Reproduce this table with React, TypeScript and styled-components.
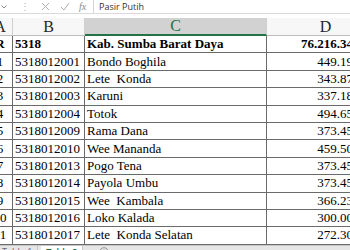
import React from 'react';
import styled, { createGlobalStyle } from 'styled-components';

const GlobalStyle = createGlobalStyle`
  html, body {
    margin: 0;
    padding: 0;
    background: #ffffff;
    overflow: hidden;
  }
`;

interface IRow {
  no: string,
  code: string,
  name: string,
  area: string,
  bold?: boolean,
}

const rows: IRow[] = [
  { no: 'R', code: '5318', name: 'Kab. Sumba Barat Daya', area: '76.216.34', bold: true },
  { no: '1', code: '5318012001', name: 'Bondo Boghila', area: '449.19' },
  { no: '2', code: '5318012002', name: 'Lete  Konda', area: '343.87' },
  { no: '3', code: '5318012003', name: 'Karuni', area: '337.18' },
  { no: '4', code: '5318012004', name: 'Totok', area: '494.65' },
  { no: '5', code: '5318012009', name: 'Rama Dana', area: '373.45' },
  { no: '6', code: '5318012010', name: 'Wee Mananda', area: '459.50' },
  { no: '7', code: '5318012013', name: 'Pogo Tena', area: '373.45' },
  { no: '8', code: '5318012014', name: 'Payola Umbu', area: '373.45' },
  { no: '9', code: '5318012015', name: 'Wee  Kambala', area: '366.23' },
  { no: '10', code: '5318012016', name: 'Loko Kalada', area: '300.00' },
  { no: '11', code: '5318012017', name: 'Lete  Konda Selatan', area: '272.30' },
];

const columns = ['A', 'B', 'C', 'D'];

const App: React.FC = () => {
  return (
    <>
      <GlobalStyle />
      <Frame>
        <FormulaBar>
          <NameBoxArrow>
            <svg width="6" height="4" viewBox="0 0 6 4">
              <path d="M0.5 0.5 L3 3 L5.5 0.5" fill="none" stroke="#8a8a8a" strokeWidth="1" />
            </svg>
          </NameBoxArrow>
          <Dots>⋮</Dots>
          <BarIcon>
            <svg width="9" height="9" viewBox="0 0 9 9">
              <path d="M1 1 L8 8 M8 1 L1 8" stroke="#b0b0b0" strokeWidth="1" />
            </svg>
          </BarIcon>
          <BarIcon>
            <svg width="10" height="9" viewBox="0 0 10 9">
              <path d="M1 5 L4 8 L9 1" fill="none" stroke="#b0b0b0" strokeWidth="1" />
            </svg>
          </BarIcon>
          <FxLabel>fx</FxLabel>
          <FormulaInput>Pasir Putih</FormulaInput>
        </FormulaBar>
        <Sheet>
          {columns.map((c) => (
            <HeaderCell key={c} $active={c === 'C'}>{c}</HeaderCell>
          ))}
          {rows.map((r) => (
            <React.Fragment key={r.code}>
              <Cell $align="center" $bold={r.bold}><span>{r.no}</span></Cell>
              <Cell $bold={r.bold}><span>{r.code}</span></Cell>
              <Cell $bold={r.bold}><span>{r.name}</span></Cell>
              <Cell $align="right" $bold={r.bold}><span>{r.area}</span></Cell>
            </React.Fragment>
          ))}
        </Sheet>
        <TabBar>
          <Tab>Table 1</Tab>
          <Tab $active>Table 2</Tab>
          <AddSheet>
            <svg width="10" height="10" viewBox="0 0 10 10">
              <circle cx="5" cy="5" r="4.3" fill="none" stroke="#8a8a8a" strokeWidth="0.9" />
              <path d="M5 2.6 V7.4 M2.6 5 H7.4" stroke="#8a8a8a" strokeWidth="0.9" />
            </svg>
          </AddSheet>
        </TabBar>
      </Frame>
    </>
  );
};

export default App;

const Frame = styled.div`
  width: 350px;
  height: 250px;
  overflow: hidden;
  display: flex;
  flex-direction: column;
  background: #ffffff;
`;

const FormulaBar = styled.div`
  height: 13px;
  flex: none;
  display: flex;
  align-items: center;
  border-bottom: 1px solid #dadada;
  margin-bottom: 4px;
  font-family: 'Open Sans', 'Noto Sans', sans-serif;
`;

const NameBoxArrow = styled.div`
  width: 8px;
  display: flex;
  justify-content: center;
`;

const Dots = styled.div`
  width: 10px;
  margin-left: 12px;
  color: #b5b5b5;
  font-size: 10px;
  line-height: 13px;
  text-align: center;
`;

const BarIcon = styled.div`
  width: 10px;
  display: flex;
  justify-content: center;
  margin-left: 10px;
`;

const FxLabel = styled.div`
  margin-left: 9px;
  width: 12px;
  font-family: 'Liberation Serif', serif;
  font-style: italic;
  font-size: 10px;
  color: #8a8a8a;
  line-height: 13px;
`;

const FormulaInput = styled.div`
  flex: 1;
  height: 13px;
  margin-left: 2px;
  padding-left: 5px;
  border-left: 1px solid #d4d4d4;
  font-size: 9px;
  line-height: 13px;
  color: #333333;
`;

const Sheet = styled.div`
  flex: none;
  display: grid;
  grid-template-columns: 25px 72px 182px 118px;
  grid-template-rows: 18px;
  grid-auto-rows: 17.4px;
  margin-left: -12px;
  font-family: 'Liberation Serif', 'Times New Roman', serif;
  font-size: 13px;
  color: #000000;
`;

const HeaderCell = styled.div<{ $active?: boolean }>`
  box-sizing: border-box;
  display: flex;
  align-items: center;
  justify-content: center;
  font-size: 16px;
  color: ${(p) => (p.$active ? '#217346' : '#262626')};
  background: ${(p) => (p.$active ? '#d2d2d2' : '#f7f7f7')};
  border-right: 1px solid #cfcfcf;
  border-bottom: ${(p) => (p.$active ? '2px solid #217346' : '1px solid #bcbcbc')};
`;

const Cell = styled.div<{ $align?: 'left' | 'center' | 'right', $bold?: boolean }>`
  box-sizing: border-box;
  display: flex;
  align-items: center;
  justify-content: ${(p) => (p.$align === 'right' ? 'flex-end' : p.$align === 'center' ? 'center' : 'flex-start')};
  padding: ${(p) => (p.$align === 'right' ? '0 31px 0 0' : p.$align === 'center' ? '0' : '0 0 0 2px')};
  border-right: 1px solid #6a6a6a;
  border-bottom: 1px solid #6a6a6a;
  font-weight: ${(p) => (p.$bold ? 700 : 400)};
  white-space: pre;
  overflow: hidden;
`;

const TabBar = styled.div`
  flex: 1;
  display: flex;
  align-items: flex-start;
  background: #e6e6e6;
  border-top: 1px solid #c8c8c8;
  font-family: 'Open Sans', 'Noto Sans', sans-serif;
  font-size: 9px;
  line-height: 12px;
`;

const Tab = styled.div<{ $active?: boolean }>`
  padding: 0 5px;
  margin-left: ${(p) => (p.$active ? '3px' : '-3px')};
  color: ${(p) => (p.$active ? '#217346' : '#6a6a6a')};
  font-weight: ${(p) => (p.$active ? 600 : 400)};
  background: ${(p) => (p.$active ? '#ffffff' : 'transparent')};
  border-right: 1px solid #c8c8c8;
`;

const AddSheet = styled.div`
  margin-left: 16px;
  margin-top: 1px;
  display: flex;
`;
